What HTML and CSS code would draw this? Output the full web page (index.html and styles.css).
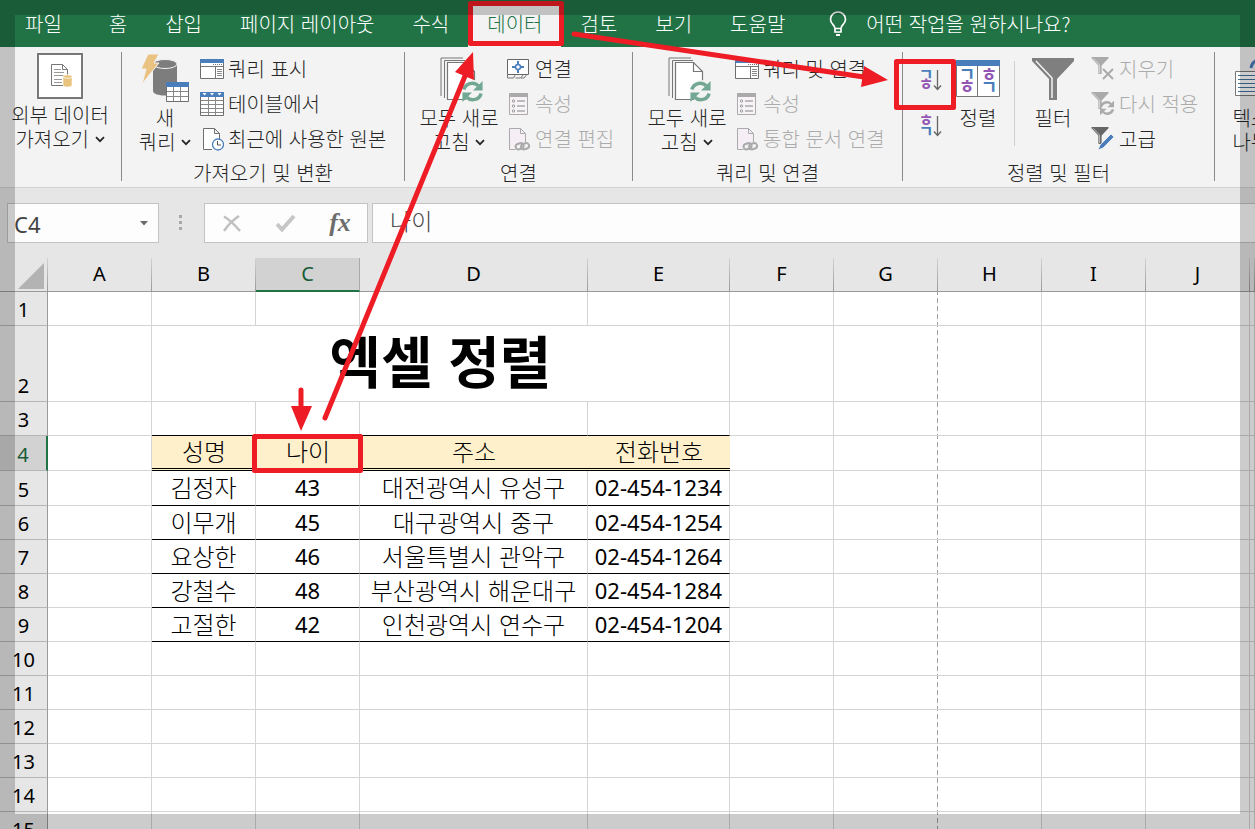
FILE: index.html
```html
<!DOCTYPE html>
<html lang="ko">
<head>
<meta charset="utf-8">
<meta name="viewport" content="width=device-width, initial-scale=1">
<title>엑셀 정렬</title>
<link rel="stylesheet" href="styles.css">
</head>
<body>
<svg class="defs" aria-hidden="true">
  <symbol id="chevron" viewBox="0 0 10 7"><path d="M1 1.2l4 4 4-4" fill="none" stroke="#262626" stroke-width="1.8"/></symbol>
  <symbol id="refresh" viewBox="0 0 24 24">
    <path d="M3 10a9 9 0 0 1 15-4M21 14a9 9 0 0 1-15 4" fill="none" stroke="currentColor" stroke-width="3.6"/>
    <path d="M22.500 1v10h-10zM1.500 23V13h10z" fill="currentColor"/>
  </symbol>
  <symbol id="pages" viewBox="0 0 44 46">
    <path d="M1 39V1h22M4.500 41V3.500H25" fill="none" stroke="#777"/>
    <path d="M7.500 5.500h18l9 9v28h-27z" fill="#fff" stroke="#777" stroke-width="1.200"/>
    <path d="M25.500 5.500v9h9" fill="none" stroke="#777" stroke-width="1.200"/>
    <circle cx="33" cy="34" r="11" fill="#f3f3f3"/>
    <svg x="21" y="23" width="23" height="23" color="#72a893"><use href="#refresh"/></svg>
  </symbol>
  <symbol id="pane" viewBox="0 0 24 22">
    <path d="M.5 1.500h23v19H.5z" fill="#fff" stroke="#6e6e6e"/><path d="M0 1h24v4H0z" fill="#4a7ebb"/>
    <path d="M1 8.500h22M15.500 9v12" stroke="#777" fill="none"/>
    <path d="M13 6.500h9" stroke="#777" stroke-dasharray="1 1"/>
    <path d="M17 11.500h5M17 13.500h5M17 15.500h5M17 17.500h5" stroke="#888"/>
  </symbol>
  <symbol id="props" viewBox="0 0 24 24">
    <path d="M2.500 1.500h18v21h-18z" fill="#f7f3f7" stroke="#aaa"/><path d="M2 1h19v4H2z" fill="#aaa"/>
    <path d="M10 9h8M10 14h8M10 19h8" stroke="#aaa" stroke-width="1.300"/>
    <g fill="none" stroke="#999"><circle cx="6.500" cy="9" r="1.200"/><circle cx="6.500" cy="14" r="1.200"/><circle cx="6.500" cy="19" r="1.200"/></g>
  </symbol>
  <symbol id="doclink" viewBox="0 0 24 24">
    <path d="M2.500 22.500v-21h11l5 5v9M2.500 22.500h6" fill="#f5eff5" stroke="#aaa"/><path d="M13.500 1.500v5h5" fill="none" stroke="#aaa"/>
    <g fill="none" stroke="#aaa" stroke-width="2"><rect x="8.500" y="16.500" width="8" height="5.500" rx="2.700" transform="rotate(-18 12.500 19)"/><rect x="14" y="16.500" width="8" height="5.500" rx="2.700" transform="rotate(-18 18 19)"/></g>
  </symbol>
  <symbol id="funnel" viewBox="0 0 42 42">
    <path d="M0 0h42v3L25 21v21h-8V21L0 3z" fill="currentColor"/>
    <path d="M4 3l16 17v20" fill="none" stroke="#f3f3f3" stroke-width="1.500"/>
  </symbol>
</svg>

<div class="app">
  <nav class="tabs">
    <button class="tab">파일</button><button class="tab">홈</button><button class="tab">삽입</button><button class="tab">페이지 레이아웃</button><button class="tab">수식</button><button class="tab active">데이터</button><button class="tab">검토</button><button class="tab">보기</button><button class="tab">도움말</button>
    <button class="tell-me">
      <svg width="18" height="26" viewBox="0 0 18 26" fill="none" stroke="#fff" stroke-width="1.700"><path d="M6 17.500c0-4-4.500-4.500-4.500-9a7.500 7.500 0 0 1 15 0c0 4.500-4.500 5-4.500 9zM6 17v4h6v-4"/><path d="M7 24h4" stroke-width="2"/></svg>
      <span>어떤 작업을 원하시나요?</span>
    </button>
  </nav>

  <div class="ribbon">
    <section class="group external">
      <div class="tools">
        <button class="big">
          <span class="pic"><svg width="46" height="46" viewBox="0 0 46 46"><path d="M1 1h44v44H1z" fill="#fff" stroke="#777" stroke-width="2"/><path d="M14.500 11.500h11l5 5v16h-16zM25.500 11.500v5h5" fill="none" stroke="#777"/><path d="M17 16.500h7M17 19.500h10M17 22.500h10M17 26.500h8M17 29.500h8" stroke="#999"/><path d="M26 23h9v9a4.500 2 0 0 1-9 0z" fill="#e9c27c" stroke="#fff" stroke-width=".6"/><ellipse cx="30.500" cy="23.500" rx="4.500" ry="1.800" fill="#e9c27c" stroke="#fff" stroke-width=".8"/></svg></span>
          <span>외부 데이터</span><span>가져오기 <svg class="chev"><use href="#chevron"/></svg></span>
        </button>
      </div>
    </section>

    <section class="group query">
      <div class="tools">
        <button class="big">
          <span class="pic"><svg width="50" height="50" viewBox="0 0 50 50"><path d="M13 11v27c0 6 24 6 24 0V11z" fill="#7d7d7d"/><ellipse cx="25" cy="11" rx="12" ry="4.500" fill="#7d7d7d" stroke="#f3f3f3"/><path d="M8 1h11l-5 9h5L2 31l4-15H1z" fill="#eac282" stroke="#f3f3f3"/><path d="M26.500 29.500h22v19h-22z" fill="#fff" stroke="#6f6f6f"/><path d="M27 38.500h21M27 43.500h21M33.500 34v14M40.500 34v14" stroke="#888"/><path d="M26 29h23v5H26z" fill="#4a7ebb"/></svg></span>
          <span>새</span><span>쿼리 <svg class="chev"><use href="#chevron"/></svg></span>
        </button>
        <div class="list">
          <button class="small"><svg width="24" height="22"><use href="#pane"/></svg>쿼리 표시</button>
          <button class="small"><svg width="24" height="25" viewBox="0 0 24 25"><path d="M.5 1.500h23v23H.5z" fill="#fff" stroke="#6e6e6e"/><path d="M1 9.500h22M1 13.500h22M1 17.500h22M1 21.500h22M8.500 6v18M15.500 6v18" stroke="#888"/><path d="M0 1h24v5H0z" fill="#4a7ebb"/><path d="M2.500 2h4l-2 2.500zM10 2h4l-2 2.500zM17.500 2h4l-2 2.500z" fill="#fff"/></svg>테이블에서</button>
          <button class="small"><svg width="24" height="24" viewBox="0 0 24 24"><path d="M12 22.500H3.500v-21h11l5 5v6M14.500 1.500v5h5" fill="#fff" stroke="#6e6e6e"/><circle cx="18" cy="17.500" r="5.500" fill="#fff" stroke="#4a7ebb" stroke-width="1.300"/><path d="M17.500 14v4h3.500" fill="none" stroke="#555"/></svg>최근에 사용한 원본</button>
        </div>
      </div>
      <h2>가져오기 및 변환</h2>
    </section>

    <section class="group connect">
      <div class="tools">
        <button class="big"><span class="pic pages"><svg width="44" height="46"><use href="#pages"/></svg></span><span>모두 새로</span><span>고침 <svg class="chev"><use href="#chevron"/></svg></span></button>
        <div class="list">
          <button class="small"><svg width="24" height="22" viewBox="0 0 24 22"><path d="M.5 1.500h21v15H.5z" fill="#fff" stroke="#666"/><path d="M.5 16.500v3.500h6l2-3.500M8.500 20h5l3-3.500M14 20h3l3-3.500" fill="none" stroke="#777"/><circle cx="11" cy="9" r="2.500" fill="none" stroke="#4a7ebb" stroke-width="1.500"/><path d="M11 3v3.500M11 11.500V15M5 9h3.500M13.500 9H17" stroke="#4a7ebb" stroke-width="2"/></svg>연결</button>
          <button class="small" disabled><svg width="24" height="24"><use href="#props"/></svg>속성</button>
          <button class="small" disabled><svg width="24" height="24"><use href="#doclink"/></svg>연결 편집</button>
        </div>
      </div>
      <h2>연결</h2>
    </section>

    <section class="group query-connect">
      <div class="tools">
        <button class="big"><span class="pic pages"><svg width="44" height="46"><use href="#pages"/></svg></span><span>모두 새로</span><span>고침 <svg class="chev"><use href="#chevron"/></svg></span></button>
        <div class="list">
          <button class="small"><svg width="24" height="22"><use href="#pane"/></svg>쿼리 및 연결</button>
          <button class="small" disabled><svg width="24" height="24"><use href="#props"/></svg>속성</button>
          <button class="small" disabled><svg width="24" height="24"><use href="#doclink"/></svg>통합 문서 연결</button>
        </div>
      </div>
      <h2>쿼리 및 연결</h2>
    </section>

    <section class="group sort-filter">
      <div class="tools">
        <div class="orders">
          <button aria-label="오름차순 정렬"><svg width="22" height="24" viewBox="0 0 22 24"><text class="jamo blue" x="6" y="12">ㄱ</text><text class="jamo purple" x="6" y="22">ㅎ</text><path d="M17.500 2v19M14 17.500l3.500 4 3.500-4" fill="none" stroke="#666" stroke-width="1.300"/></svg></button>
          <button aria-label="내림차순 정렬"><svg width="22" height="24" viewBox="0 0 22 24"><text class="jamo purple" x="6" y="12">ㅎ</text><text class="jamo blue" x="6" y="23">ㄱ</text><path d="M17.500 2v19M14 17.500l3.500 4 3.500-4" fill="none" stroke="#666" stroke-width="1.300"/></svg></button>
        </div>
        <button class="big sort"><span class="pic"><svg width="44" height="38" viewBox="0 0 44 38"><path d="M.5.5h43v36H.5zM21.500 5v31" fill="#fff" stroke="#777"/><path d="M0 0h44v6H0z" fill="#4a7ebb"/><text class="jamo wide blue" x="11" y="21">ㄱ</text><text class="jamo wide purple" x="11" y="33">ㅎ</text><text class="jamo wide purple" x="33" y="21">ㅎ</text><text class="jamo wide blue" x="33" y="34">ㄱ</text></svg></span><span>정렬</span></button>
        <span class="rule"></span>
        <button class="big filter"><span class="pic"><svg width="42" height="42" color="#7f7f7f"><use href="#funnel"/></svg></span><span>필터</span></button>
        <div class="list">
          <button class="small" disabled><svg width="24" height="24" viewBox="0 0 24 24" color="#aaa"><svg x="0" y="0" width="18" height="17"><use href="#funnel"/></svg><path d="M12 12l10 10M22 12L12 22" stroke="#aaa" stroke-width="2"/></svg>지우기</button>
          <button class="small" disabled><svg width="24" height="24" viewBox="0 0 24 24" color="#aaa"><svg x="0" y="0" width="18" height="17"><use href="#funnel"/></svg><svg x="8" y="8" width="16" height="16"><use href="#refresh"/></svg></svg>다시 적용</button>
          <button class="small"><svg width="24" height="24" viewBox="0 0 24 24" color="#666"><svg x="0" y="0" width="18" height="17"><use href="#funnel"/></svg><path d="M7 23l2-5L20 7l3 3-11 11z" fill="#4a7ebb" stroke="#f3f3f3" stroke-width=".8"/></svg>고급</button>
        </div>
      </div>
      <h2>정렬 및 필터</h2>
    </section>

    <section class="group split">
      <div class="tools">
        <button class="big"><span class="pic"><svg width="50" height="46" viewBox="0 0 50 46"><path d="M.5 15.500h34v24H.5z" fill="#fff" stroke="#777"/><path d="M3 19.500h30M3 23.500h30M3 27.500h30M3 31.500h30M3 35.500h30" stroke="#44719f"/><path d="M16 12c1-7 7-10 14-7" fill="none" stroke="#4a7ebb" stroke-width="3"/></svg></span><span>텍스트</span><span>나누기</span></button>
      </div>
    </section>
  </div>

  <div class="formula-bar">
    <div class="name-box"><input aria-label="이름 상자" value="C4"><button aria-label="이름 목록"><svg width="8" height="5" viewBox="0 0 8 5"><path d="M0 0h8L4 4.500z" fill="#6a6a6a"/></svg></button></div>
    <span class="grip"></span>
    <div class="entry">
      <button aria-label="취소"><svg width="18" height="17" viewBox="0 0 18 17"><path d="M1 1.500C7 5 11 9 17 16M16 1C10 5 5 10 1 16" fill="none" stroke="#c0c0c0" stroke-width="2.500"/></svg></button>
      <button aria-label="입력"><svg width="20" height="18" viewBox="0 0 20 18"><path d="M1 10l5 5.500L18 2" fill="none" stroke="#c6c6c6" stroke-width="4"/></svg></button>
      <button class="fx" aria-label="함수 삽입">fx</button>
    </div>
    <input class="formula" aria-label="수식 입력줄" value="나이">
  </div>

  <main class="sheet">
    <table>
      <colgroup><col class="c-head"><col class="c-std"><col class="c-std"><col class="c-std"><col class="c-addr"><col class="c-tel"><col class="c-std"><col class="c-std c-brk"><col class="c-std"><col class="c-std"><col class="c-std"><col></colgroup>
      <thead><tr><th class="corner"><svg width="26" height="26" viewBox="0 0 26 26"><path d="M26 0v26H0z" fill="#b3b3b3"/></svg></th><th>A</th><th>B</th><th class="on">C</th><th>D</th><th>E</th><th>F</th><th>G</th><th>H</th><th>I</th><th>J</th><th></th></tr></thead>
      <tbody>
        <tr><th>1</th><td></td><td></td><td></td><td></td><td></td><td></td><td class="brk"></td><td></td><td></td><td></td><td></td></tr>
        <tr class="tall"><th>2</th><td></td><td class="title" colspan="4">엑셀 정렬</td><td></td><td class="brk"></td><td></td><td></td><td></td><td></td></tr>
        <tr><th>3</th><td></td><td class="line"></td><td class="line"></td><td class="line"></td><td class="line"></td><td></td><td class="brk"></td><td></td><td></td><td></td><td></td></tr>
        <tr class="mid"><th class="on">4</th><td></td><td class="head">성명</td><td class="head">나이</td><td class="head">주소</td><td class="head">전화번호</td><td></td><td class="brk"></td><td></td><td></td><td></td><td></td></tr>
        <tr class="mid"><th>5</th><td></td><td class="line">김정자</td><td class="line num">43</td><td class="line">대전광역시 유성구</td><td class="line num">02-454-1234</td><td></td><td class="brk"></td><td></td><td></td><td></td><td></td></tr>
        <tr><th>6</th><td></td><td class="line">이무개</td><td class="line num">45</td><td class="line">대구광역시 중구</td><td class="line num">02-454-1254</td><td></td><td class="brk"></td><td></td><td></td><td></td><td></td></tr>
        <tr><th>7</th><td></td><td class="line">요상한</td><td class="line num">46</td><td class="line">서울특별시 관악구</td><td class="line num">02-454-1264</td><td></td><td class="brk"></td><td></td><td></td><td></td><td></td></tr>
        <tr><th>8</th><td></td><td class="line">강철수</td><td class="line num">48</td><td class="line">부산광역시 해운대구</td><td class="line num">02-454-1284</td><td></td><td class="brk"></td><td></td><td></td><td></td><td></td></tr>
        <tr><th>9</th><td></td><td class="line">고절한</td><td class="line num">42</td><td class="line">인천광역시 연수구</td><td class="line num">02-454-1204</td><td></td><td class="brk"></td><td></td><td></td><td></td><td></td></tr>
        <tr><th>10</th><td></td><td></td><td></td><td></td><td></td><td></td><td class="brk"></td><td></td><td></td><td></td><td></td></tr>
        <tr><th>11</th><td></td><td></td><td></td><td></td><td></td><td></td><td class="brk"></td><td></td><td></td><td></td><td></td></tr>
        <tr><th>12</th><td></td><td></td><td></td><td></td><td></td><td></td><td class="brk"></td><td></td><td></td><td></td><td></td></tr>
        <tr><th>13</th><td></td><td></td><td></td><td></td><td></td><td></td><td class="brk"></td><td></td><td></td><td></td><td></td></tr>
        <tr><th>14</th><td></td><td></td><td></td><td></td><td></td><td></td><td class="brk"></td><td></td><td></td><td></td><td></td></tr>
        <tr><th>15</th><td></td><td></td><td></td><td></td><td></td><td></td><td class="brk"></td><td></td><td></td><td></td><td></td></tr>
      </tbody>
    </table>
  </main>
</div>

<svg class="marks" width="1255" height="829" viewBox="0 0 1255 829" aria-hidden="true">
  <g fill="none" stroke="#ee1c25" stroke-width="5" stroke-linejoin="round" stroke-linecap="round">
    <path d="M470.500 3.500h91v40h-91zM896.500 61.500h57v46h-57zM254.500 436.500h106v34h-106z"/>
    <path d="M574 34L864 77M325 418L465 76M301 390v18"/>
  </g>
  <path d="M888 80l-24-14-3 21zM473 52l-18 20 19 8zM301 431l-10-25h21z" fill="#ee1c25"/>
</svg>
<div class="shade"></div>
</body>
</html>
```

FILE: styles.css
```css
* { box-sizing: border-box; }

body {
  margin: 0;
  overflow: hidden;
  font-family: "Noto Sans CJK KR", "Noto Sans", sans-serif;
  font-size: 20px;
  font-weight: 300;
  color: #262626;
}

button, input {
  margin: 0;
  padding: 0;
  border: 0;
  background: none;
  font: inherit;
  color: inherit;
}

button { white-space: nowrap; }
.defs { display: none; }

.app {
  display: flex;
  flex-direction: column;
  height: 100vh;
  background: #e6e6e6;
}

/* Tabs */
.tabs {
  display: flex;
  flex: none;
  height: 47px;
  padding-left: 6px;
  background: #217346;
  color: #fff;
}

.tab { padding: 0 19px; }
.tab:first-child { padding-right: 28px; }

.tab.active {
  margin-top: 4px;
  padding-bottom: 4px;
  background: #f3f3f3;
  color: #217346;
}

.tell-me {
  display: flex;
  align-items: center;
  gap: 19px;
  margin-left: 25px;
}

/* Ribbon */
.ribbon {
  display: flex;
  flex: none;
  overflow: hidden;
  padding: 5px 0 6px;
  background: #f3f3f3;
  border-bottom: 1px solid #d2d2d2;
}

.group {
  display: flex;
  flex-direction: column;
  flex: none;
  height: 129px;
  border-right: 1px solid #8a8a8a;
}

.tools {
  display: flex;
  flex: 1;
  gap: 2px;
}

.group h2 {
  margin: 0;
  font-size: 20px;
  font-weight: 300;
  line-height: 16px;
  text-align: center;
}

.external { width: 122px; }
.query { width: 283px; }
.connect { width: 228px; }
.query-connect { width: 270px; }
.sort-filter { width: 312px; }
.split { border: 0; }

.big {
  display: flex;
  flex-direction: column;
  align-items: center;
  width: 92px;
  line-height: 24px;
}

.pic {
  display: flex;
  align-items: center;
  justify-content: center;
  height: 54px;
}

.pages { padding: 2px 0 0 6px; }
.external .big { width: 120px; }
.external .pic { height: 51px; padding-bottom: 4px; }
.query .tools { padding-left: 10px; }
.query .big { width: 66px; }
.query .pic { padding-bottom: 2px; }
.connect .tools, .query-connect .tools { padding-left: 8px; }
.sort-filter .tools { padding-left: 17px; gap: 13px; }
.sort-filter .sort { width: 46px; }
.sort-filter .filter { width: 50px; }
.split .tools { padding-left: 16px; }
.split .big { width: 58px; }

.chev {
  width: 10px;
  height: 7px;
  margin-bottom: 4px;
}

.small {
  display: flex;
  align-items: center;
  gap: 4px;
  height: 35px;
  padding-bottom: 2px;
}

.small:disabled { color: #ababab; }

.orders {
  display: flex;
  flex-direction: column;
  gap: 22px;
  padding-top: 16px;
}

.orders button, .orders svg {
  display: block;
  height: 24px;
}

.orders svg, .sort svg { overflow: visible; }

.jamo {
  font-size: 16px;
  font-weight: 700;
  text-anchor: middle;
}

.wide { font-size: 18px; }
.blue { fill: #4a7ebb; }
.purple { fill: #9356b4; }

.rule {
  width: 1px;
  height: 85px;
  margin-top: 9px;
  background: #d0d0d0;
}

/* Formula bar */
.formula-bar {
  display: flex;
  flex: none;
  height: 70px;
  padding: 15px 0 15px 7px;
  color: #444;
}

.name-box, .entry, .formula {
  height: 40px;
  border: 1px solid #c3c3c3;
  background: #fdfdfd;
}

.name-box {
  display: flex;
  width: 152px;
}

.name-box input {
  flex: 1;
  min-width: 0;
  padding: 2px 0 0 6px;
  font-family: "Noto Sans", sans-serif;
  font-size: 22px;
  font-weight: 400;
}

.name-box button { width: 28px; }
.name-box svg { display: block; margin: 0 auto; }

.grip {
  width: 3px;
  height: 15px;
  margin: 12px 22px 0 20px;
  background: repeating-linear-gradient(#a8a8a8 0 3px, transparent 3px 6px);
}

.entry {
  display: flex;
  width: 164px;
  margin-right: 4px;
}

.entry button { flex: 1; }
.entry svg { display: block; margin: 0 auto; }

.entry .fx {
  font-family: "Liberation Serif", serif;
  font-size: 26px;
  font-style: italic;
  font-weight: 700;
  line-height: 32px;
  color: #6d6d6d;
}

.formula {
  flex: 1;
  min-width: 0;
  padding: 0 0 6px 17px;
  border-right: 0;
  font-size: 23px;
}

/* Sheet */
.sheet {
  flex: 1;
  min-height: 0;
  overflow: hidden;
  background: #fff;
}

table {
  width: 100%;
  table-layout: fixed;
  border-collapse: separate;
  border-spacing: 0;
  color: #000;
}

.c-head { width: 48px; }
.c-std { width: 104px; }
.c-addr { width: 228px; }
.c-tel { width: 142px; }

/* Page-break guide along the right edge of the column */
.c-brk {
  background: repeating-linear-gradient(#a0a0a0 0 5px, transparent 5px 8px) right / 1px 100% no-repeat;
}

tr { height: 34px; }
.mid { height: 35px; }
.tall { height: 76px; }

th, td {
  padding: 0 0 2px;
  overflow: hidden;
  line-height: 28px;
  text-align: center;
  white-space: nowrap;
}

th {
  background: #e6e6e6;
  font-family: "Noto Sans", sans-serif;
  font-size: 20px;
  font-weight: 400;
}

thead th {
  border-bottom: 1px solid #999;
  border-right: 1px solid;
  border-image: linear-gradient(#d4d4d4, #999) 1;
}

thead .on {
  padding-bottom: 1px;
  background: #d2d2d2;
  border-bottom: 2px solid #217346;
  border-image: none;
  border-right-color: #aaa;
  color: #185c37;
}

.corner svg {
  display: block;
  margin: 4px 0 0 18px;
}

tbody th {
  padding-bottom: 1px;
  border-right: 1px solid #999;
  border-bottom: 1px solid #b5b5b5;
  vertical-align: bottom;
}

tbody .on {
  background: #d2d2d2;
  border-right: 2px solid #217346;
  color: #185c37;
}

td {
  border-right: 1px solid #d4d4d4;
  border-bottom: 1px solid #d4d4d4;
  font-size: 24px;
}

td.brk { border-right: 0; }
td.line { border-bottom-color: #000; }

td.head {
  background: #fff0cc;
  border-right: 0;
  border-bottom: 3px double #000;
}

td.num {
  font-family: "Noto Sans", sans-serif;
  font-size: 22px;
  font-weight: 400;
}

td.title {
  padding-bottom: 10px;
  font-size: 56px;
  font-weight: 700;
  line-height: 64px;
}

/* Annotations and window shading */
.marks {
  position: absolute;
  top: 0;
  left: 0;
  pointer-events: none;
}

.shade {
  position: fixed;
  inset: 0;
  border: 15px solid rgba(0, 0, 0, 0.2);
  pointer-events: none;
}
```
